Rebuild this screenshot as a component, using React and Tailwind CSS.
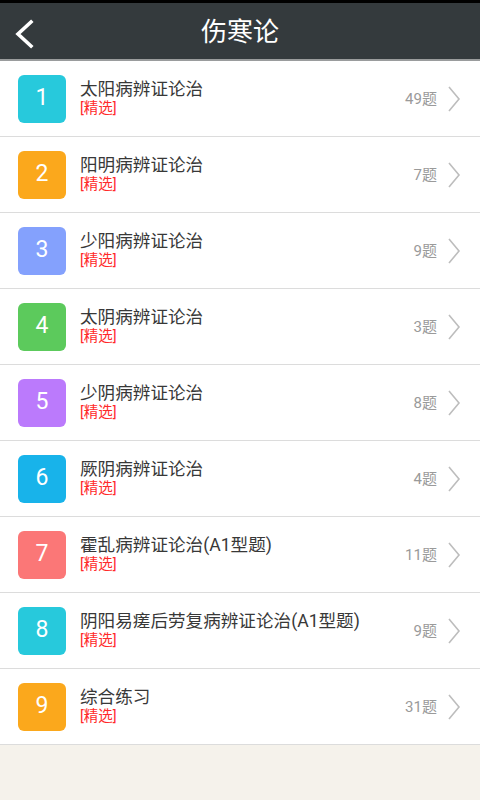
const items = [
  { n: 1, title: '太阳病辨证论治', count: 49, color: 'bg-[#27c9dc]' },
  { n: 2, title: '阳明病辨证论治', count: 7, color: 'bg-[#fba81c]' },
  { n: 3, title: '少阳病辨证论治', count: 9, color: 'bg-[#84a1fd]' },
  { n: 4, title: '太阴病辨证论治', count: 3, color: 'bg-[#5cca5c]' },
  { n: 5, title: '少阴病辨证论治', count: 8, color: 'bg-[#bb7afc]' },
  { n: 6, title: '厥阴病辨证论治', count: 4, color: 'bg-[#18b3ea]' },
  { n: 7, title: '霍乱病辨证论治(A1型题)', count: 11, color: 'bg-[#fb7777]' },
  { n: 8, title: '阴阳易瘥后劳复病辨证论治(A1型题)', count: 9, color: 'bg-[#27c9dc]' },
  { n: 9, title: '综合练习', count: 31, color: 'bg-[#fba81c]' },
];

const font = { fontFamily: '"Roboto", "Noto Sans CJK SC", sans-serif' };

const BackArrow = () => (
  <svg className="absolute left-[12px] top-[15px]" width="24" height="32" viewBox="0 0 24 32">
    <polyline points="19,4 6,16 19,28" fill="none" stroke="#ffffff" strokeWidth="3.6" strokeLinecap="square" />
  </svg>
);

const RowArrow = () => (
  <svg width="14" height="28" viewBox="0 0 14 28">
    <polyline points="2,2 12,14 2,26" fill="none" stroke="#bdbdbd" strokeWidth="1.6" />
  </svg>
);

export default function App() {
  return (
    <div className="w-[480px] h-[800px] bg-[#f5f2eb] flex flex-col" style={font}>
      <div className="h-[3px] bg-black" />
      <div className="h-[56px] bg-[#343a3d] relative flex items-center justify-center">
        <BackArrow />
        <span className="text-white text-[26px] leading-none mt-[2px]">伤寒论</span>
      </div>
      <div className="h-[2px] bg-[#9a9c9d]" />
      <div className="bg-white">
        {items.map((it) => (
          <div key={it.n} className="h-[76px] border-b border-[#dcdcdc] flex items-center pl-[18px] pr-[19px]">
            <div className={`w-[48px] h-[48px] rounded-[6px] ${it.color} flex items-center justify-center text-white text-[23px]`}>
              {it.n}
            </div>
            <div className="ml-[14px] flex-1 flex flex-col mt-[-1px]">
              <span className="text-[#383838] text-[17.6px] leading-[22px]">{it.title}</span>
              <span className="text-[#ff2a2a] text-[14.5px] leading-[18px]">[精选]</span>
            </div>
            <span className="text-[#9a9a9a] text-[15px] mr-[10px] mt-[2px]">{it.count}题</span>
            <RowArrow />
          </div>
        ))}
      </div>
    </div>
  );
}
